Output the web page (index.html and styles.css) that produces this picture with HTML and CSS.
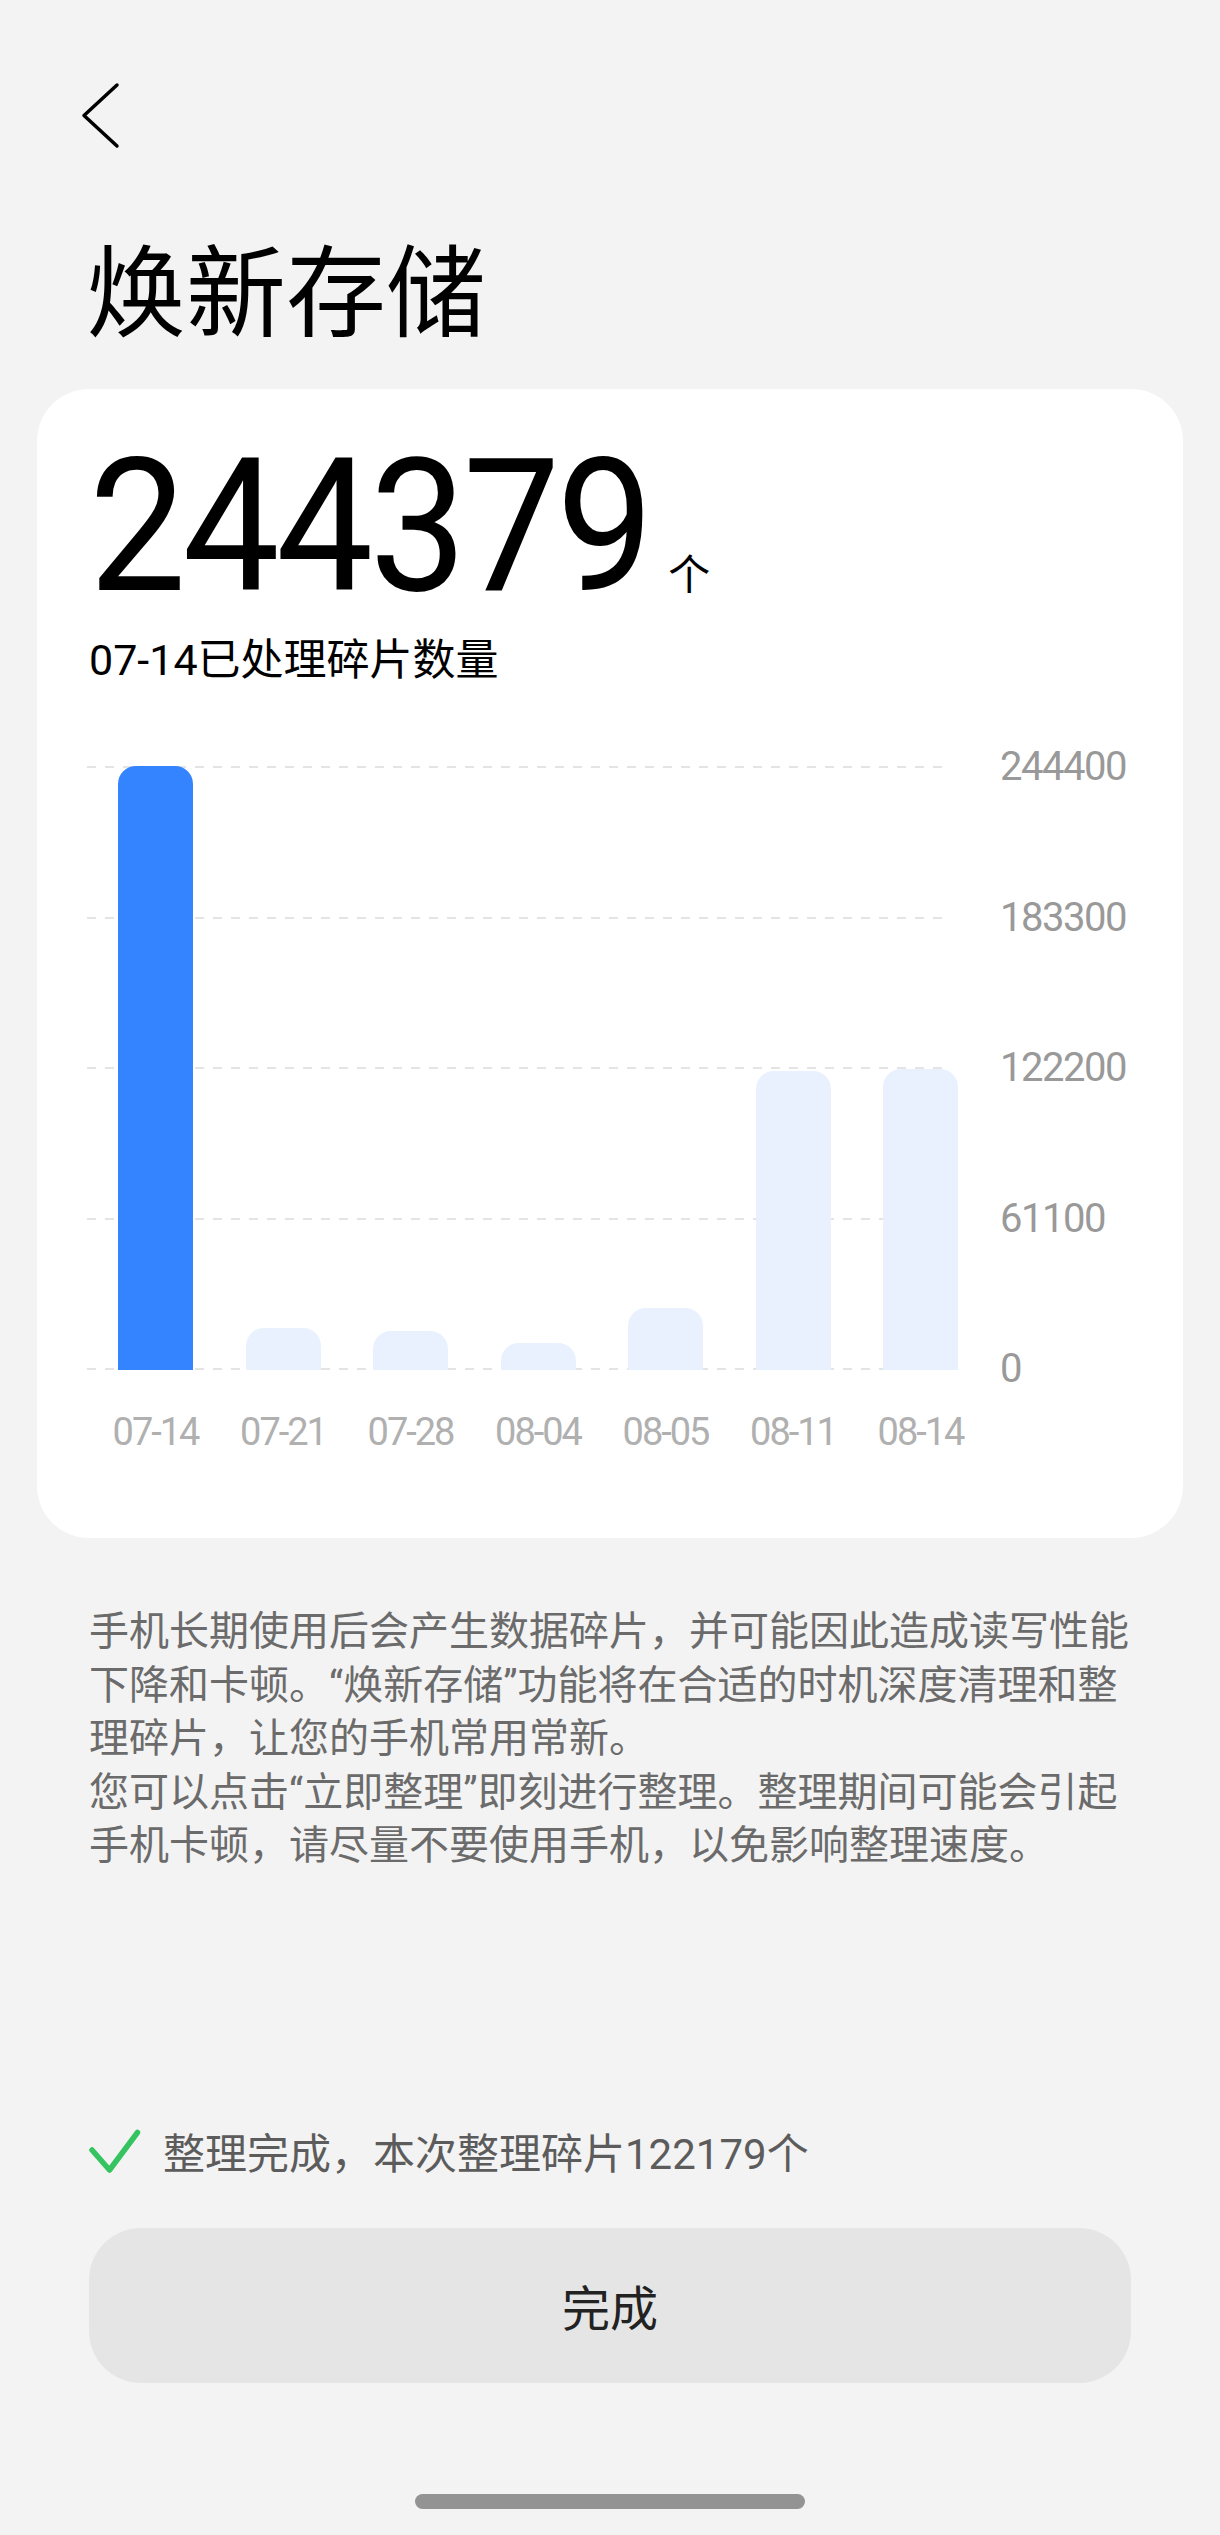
FILE: index.html
```html
<!DOCTYPE html>
<html lang="zh-CN">

<head>
    <meta charset="utf-8">
    <title>焕新存储</title>
    <link rel="stylesheet" href="styles.css">
</head>

<body>
    <div class="page">
        <!-- 返回 -->
        <div class="top">
            <svg class="back" viewBox="0 0 42 70" width="42" height="70">
                <polyline points="37,5 4,35.5 37,66" />
            </svg>
        </div>
        <h1 class="title">焕新存储</h1>

        <!-- 统计卡片 -->
        <div class="card">
            <div class="total"><span class="num">244379</span><span class="unit">个</span></div>
            <div class="caption">07-14已处理碎片数量</div>
            <div class="chart">
                <div class="chart-main">
                    <div class="plot">
                        <div class="grid"><i></i><i></i><i></i><i></i><i></i></div>
                        <div class="bars">
                            <div class="bar active" style="height:604px"></div>
                            <div class="bar" style="height:42px"></div>
                            <div class="bar" style="height:39px"></div>
                            <div class="bar" style="height:27px"></div>
                            <div class="bar" style="height:62px"></div>
                            <div class="bar" style="height:299px"></div>
                            <div class="bar" style="height:301px"></div>
                        </div>
                    </div>
                    <div class="xlabels">
                        <span>07-14</span>
                        <span>07-21</span>
                        <span>07-28</span>
                        <span>08-04</span>
                        <span>08-05</span>
                        <span>08-11</span>
                        <span>08-14</span>
                    </div>
                </div>
                <div class="ylabels">
                    <span>244400</span>
                    <span>183300</span>
                    <span>122200</span>
                    <span>61100</span>
                    <span>0</span>
                </div>
            </div>
        </div>

        <!-- 说明 -->
        <div class="desc">
            <p>手机长期使用后会产生数据碎片，并可能因此造成读写性能<br>下降和卡顿。“焕新存储”功能将在合适的时机深度清理和整<br>理碎片，让您的手机常用常新。</p>
            <p>您可以点击“立即整理”即刻进行整理。整理期间可能会引起<br>手机卡顿，请尽量不要使用手机，以免影响整理速度。</p>
        </div>

        <div class="status">
            <svg class="ok" viewBox="0 0 52 46" width="52" height="46">
                <polyline points="3,22 20.5,42 48.5,4.5" />
            </svg>
            <span>整理完成，本次整理碎片122179个</span>
        </div>

        <button class="done">完成</button>
        <div class="home-bar"></div>
    </div>
</body>

</html>
```

FILE: styles.css
```css
html,
body {
    margin: 0;
    padding: 0;
    background-color: #f3f3f3;
}

body {
    font-family: Roboto, "Noto Sans CJK SC", sans-serif;
    color: #000;
}

.page {
    padding: 0 37px;
}

/* 顶部 */
.top {
    padding: 80px 0 0 43px;
    height: 70px;
}

.back {
    display: block;
    fill: none;
    stroke: #000;
    stroke-width: 3.5;
    stroke-linecap: round;
    stroke-linejoin: round;
}

.title {
    margin: 95px 0 0;
    padding-left: 49px;
    font-size: 100px;
    line-height: 1;
    font-weight: 400;
}

/* 卡片 */
.card {
    margin-top: 44px;
    padding: 44px 52px 87px;
    background-color: #fff;
    border-radius: 52px;
}

.total {
    display: flex;
    align-items: baseline;
}

/* 数字字形偏窄，横向压一点 */
.num {
    display: inline-block;
    font-size: 186px;
    line-height: 1;
    font-weight: 400;
    letter-spacing: -4px;
    transform: scaleX(0.93);
    transform-origin: left center;
}

.unit {
    margin-left: -24px;
    font-size: 42px;
    line-height: 1;
}

.caption {
    margin-top: 20px;
    font-size: 43px;
    line-height: 1;
}

/* 图表 */
.chart {
    display: flex;
    margin: 84px 0 0 -2px;
}

.chart-main {
    width: 900px;
}

.plot {
    position: relative;
    width: 863px;
    height: 604px;
}

.grid {
    position: absolute;
    top: 0;
    left: 0;
    right: 0;
    bottom: 0;
    display: flex;
    flex-direction: column;
    justify-content: space-between;
}

.grid i {
    display: block;
    height: 2px;
    background: repeating-linear-gradient(90deg, #e4e4e4 0 9px, transparent 9px 18px);
}

.bars {
    position: relative;
    display: flex;
    align-items: flex-end;
    height: 100%;
    padding-left: 31px;
    gap: 52.5px;
}

.bar {
    flex: none;
    width: 75px;
    background-color: #e8f1fd;
    border-radius: 18px 18px 0 0;
}

.bar.active {
    background-color: #3384fe;
}

.xlabels {
    display: flex;
    margin-top: 43px;
    padding-left: 4.75px;
}

.xlabels span {
    width: 127.5px;
    text-align: center;
    font-size: 38px;
    line-height: 1;
    letter-spacing: -2px;
    color: #b0b0b0;
}

.ylabels {
    display: flex;
    flex-direction: column;
    justify-content: space-between;
    height: 642px;
    margin: -19px 0 0 13px;
}

.ylabels span {
    font-size: 40px;
    line-height: 40px;
    letter-spacing: -1.5px;
    color: #999;
}

/* 说明文字 */
.desc {
    margin-top: 67px;
    padding: 0 52px;
    font-size: 40px;
    line-height: 53.5px;
    color: #6b6b6b;
    white-space: nowrap;
}

.desc p {
    margin: 0;
}

.status {
    display: flex;
    align-items: center;
    height: 56px;
    margin-top: 250px;
    padding-left: 52px;
    font-size: 42px;
    color: #5c5c5c;
}

.ok {
    flex: none;
    margin-right: 22px;
    fill: none;
    stroke: #35c45f;
    stroke-width: 5.5;
    stroke-linecap: round;
    stroke-linejoin: round;
}

.done {
    display: block;
    width: calc(100% - 104px);
    height: 155px;
    margin: 49px 52px 0;
    border: none;
    border-radius: 52px;
    background-color: #e5e5e5;
    font-family: inherit;
    font-size: 48px;
    font-weight: 400;
    color: #222;
}

.home-bar {
    width: 390px;
    height: 15px;
    margin: 111px auto 0;
    border-radius: 8px;
    background-color: #939393;
}
```
